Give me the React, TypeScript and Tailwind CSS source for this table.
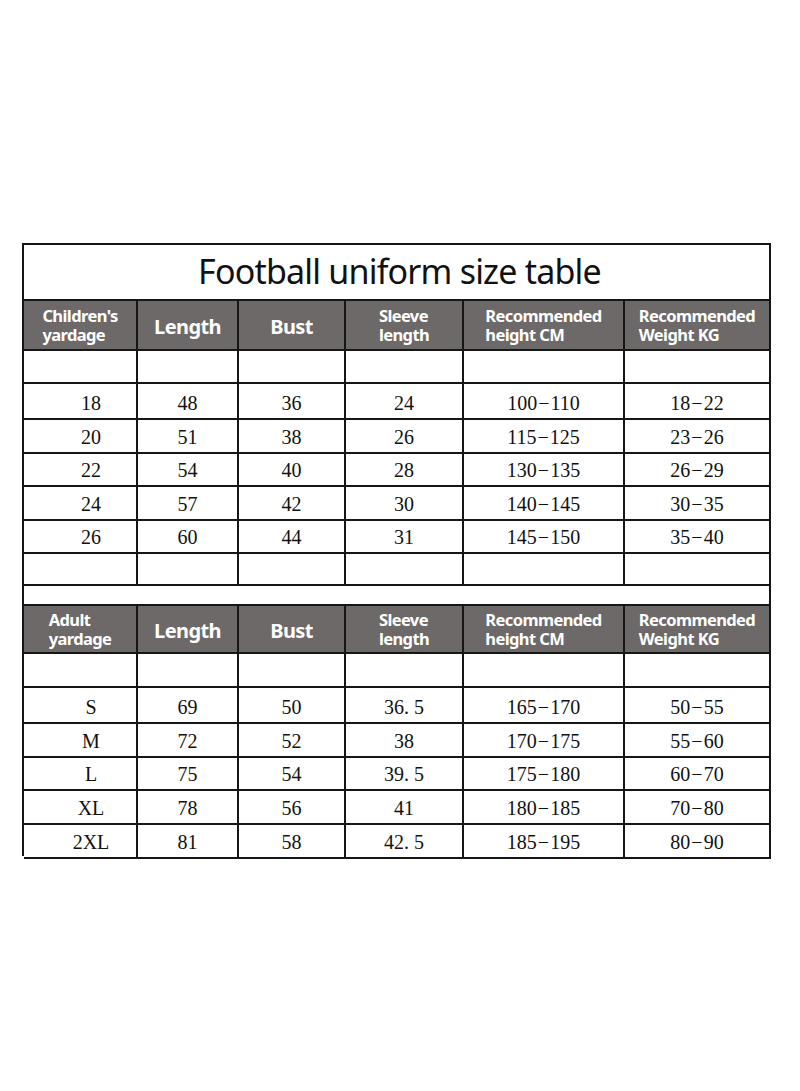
const cols = 'grid grid-cols-[114px_101px_107px_118px_161px_146px]'

type Row = [string, string, string, string, string, string]

const kids: Row[] = [
  ['18', '48', '36', '24', '100-110', '18-22'],
  ['20', '51', '38', '26', '115-125', '23-26'],
  ['22', '54', '40', '28', '130-135', '26-29'],
  ['24', '57', '42', '30', '140-145', '30-35'],
  ['26', '60', '44', '31', '145-150', '35-40'],
]

const adults: Row[] = [
  ['S', '69', '50', '36. 5', '165-170', '50-55'],
  ['M', '72', '52', '38', '170-175', '55-60'],
  ['L', '75', '54', '39. 5', '175-180', '60-70'],
  ['XL', '78', '56', '41', '180-185', '70-80'],
  ['2XL', '81', '58', '42. 5', '185-195', '80-90'],
]

const kidHeights = ['h-[34px]', 'h-[33px]', 'h-[34px]', 'h-[33px]', 'h-[34px]']
const adultHeights = ['h-[34px]', 'h-[33px]', 'h-[34px]', 'h-[34px]', 'h-[33px]']

// the dash in the sizes is a minus sign, a bit wider than a hyphen
function Range({ v }: { v: string }) {
  const parts = v.split('-')
  if (parts.length < 2) return <>{v}</>
  return (
    <>
      {parts[0]}
      <span className="px-[1px]">−</span>
      {parts[1]}
    </>
  )
}

function HeaderRow({ first, h }: { first: string; h: string }) {
  const two = (t: string) => (
    <div className="text-left text-[16.5px] leading-[19px] font-bold tracking-[-0.6px] whitespace-pre-line">{t}</div>
  )
  const one = (a: string) => <div className="text-[20px] font-bold tracking-[-0.6px] pt-[3px]">{a}</div>
  const cells = [
    two(first),
    one('Length'),
    one('Bust'),
    two('Sleeve\nlength'),
    two('Recommended\nheight CM'),
    two('Recommended\nWeight KG'),
  ]
  return (
    <div className={`${cols} ${h}`}>
      {cells.map((c, i) => (
        <div key={i} className="bg-[#6d6968] text-white border-r-2 border-b-2 border-[#161616] flex items-center justify-center">
          {c}
        </div>
      ))}
    </div>
  )
}

function EmptyRow({ h }: { h: string }) {
  return (
    <div className={`${cols} ${h}`}>
      {[0, 1, 2, 3, 4, 5].map((i) => (
        <div key={i} className="border-r-2 border-b-2 border-[#161616]" />
      ))}
    </div>
  )
}

function DataRow({ row, h }: { row: Row; h: string }) {
  return (
    <div className={`${cols} ${h} font-['Liberation_Serif',serif] text-[20px] text-[#111]`}>
      {row.map((v, i) => (
        <div
          key={i}
          className={`border-r-2 border-b-2 border-[#161616] flex items-center justify-center pt-[4px] ${i === 0 ? 'pl-[22px]' : ''}`}
        >
          <Range v={v} />
        </div>
      ))}
    </div>
  )
}

export default function App() {
  return (
    <div className="w-[800px] h-[1091px] bg-white pt-[243px] pl-[22px] font-['Noto_Sans',sans-serif]">
      <div className="w-[749px] border-l-2 border-t-2 border-[#161616]">
        <div className="h-[56px] border-r-2 border-b-2 border-[#161616] flex items-center justify-center text-[34px] text-[#111] tracking-[-0.8px] pb-[2px] pl-[6px]">
          Football uniform size table
        </div>
        <HeaderRow first={"Children's\nyardage"} h="h-[50px]" />
        <EmptyRow h="h-[33px]" />
        {kids.map((r, i) => (
          <DataRow key={r[0]} row={r} h={kidHeights[i]} />
        ))}
        <EmptyRow h="h-[34px]" />
        <div className="h-[20px] border-r-2 border-b-2 border-[#161616]" />
        <HeaderRow first={'Adult\nyardage'} h="h-[48px]" />
        <EmptyRow h="h-[34px]" />
        {adults.map((r, i) => (
          <DataRow key={r[0]} row={r} h={adultHeights[i]} />
        ))}
      </div>
    </div>
  )
}
